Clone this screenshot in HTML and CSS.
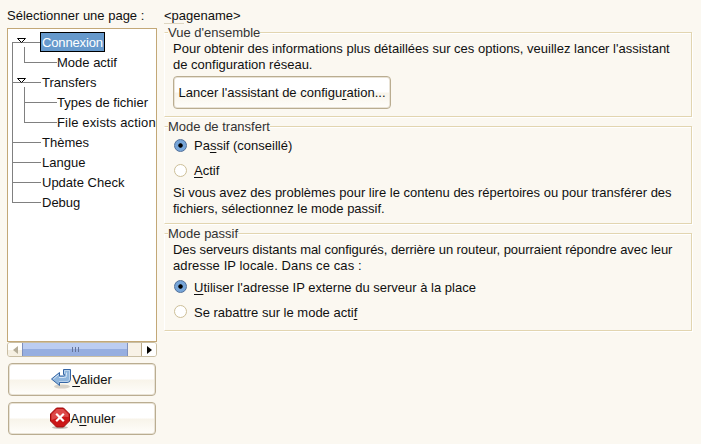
FILE: index.html
```html
<!DOCTYPE html>
<html lang="fr">
<head>
<meta charset="utf-8">
<title>Options</title>
<link rel="stylesheet" href="styles.css">
</head>
<body>
<div class="dialog">
  <aside class="sidebar">
    <div class="heading">Sélectionner une page :</div>
    <div class="tree">
      <svg class="lines" width="60" height="200" viewBox="0 0 60 200" shape-rendering="crispEdges">
        <g fill="#808080">
          <path d="M4 13h1v161h-1zM4 13h29v1H4zM4 53h29v1H4zM4 113h29v1H4zM4 133h29v1H4zM4 153h29v1H4zM4 173h29v1H4z"/>
          <path d="M16 18h1v16h-1zM16 33h33v1H16zM16 58h1v36h-1zM16 73h33v1H16zM16 93h33v1H16z"/>
        </g>
        <g fill="#fff" stroke="#000" shape-rendering="auto">
          <path d="M9.500 9.500h8l-4 4z"/>
          <path d="M9.500 49.500h8l-4 4z"/>
        </g>
      </svg>
      <div class="row"><span class="selected">Connexion</span></div>
      <div class="row child">Mode actif</div>
      <div class="row">Transfers</div>
      <div class="row child">Types de fichier</div>
      <div class="row child wide">File exists action</div>
      <div class="row">Thèmes</div>
      <div class="row">Langue</div>
      <div class="row">Update Check</div>
      <div class="row">Debug</div>
    </div>
    <div class="scrollbar">
      <div class="step"><svg width="5" height="8"><path d="M5 0v8L0 4z" fill="#b5ad98"/></svg></div>
      <div class="thumb"><i></i><i></i><i></i></div>
      <div class="trough"></div>
      <div class="step right"><svg width="5" height="8"><path d="M0 0v8L5 4z" fill="#000"/></svg></div>
    </div>
    <button class="button ok">
      <svg width="22" height="22" viewBox="0 0 22 22">
        <ellipse cx="12" cy="18.500" rx="8" ry="2" fill="#b9b5aa" opacity=".55"/>
        <path d="M13.500 1.500h7v9.500q0 3.500-3.500 3.500H9.500v3L1.500 11l8-6.500v3.500h4q1 0 1-1V6.500h-1z" fill="#8fb5dc" stroke="#3465a4"/>
        <path d="M14.500 5.500v-3h5V11q0 2.500-2.500 2.500H9" fill="none" stroke="#b9d2ec"/>
        <path d="M8.500 6.700L3.300 11M9 9.500h5.500q2 0 2-2V4.500" fill="none" stroke="#d5e5f5"/>
      </svg>
      <span><u>V</u>alider</span>
    </button>
    <button class="button cancel">
      <svg width="22" height="22" viewBox="0 0 22 22">
        <ellipse cx="11" cy="20.500" rx="8" ry="1.500" fill="#99958c" opacity=".6"/>
        <path d="M7.500 1h7l6 6v7l-6 6h-7l-6-6V7z" fill="#cc1717" stroke="#9c0c0c"/>
        <path d="M7.900 2h6.200l5.400 5.400V10q-8-1-17 3V7.400z" fill="#e66a6a" opacity=".6"/>
        <path d="M7.200 6.700l7.600 7.600M14.800 6.700l-7.600 7.600" stroke="#fff" stroke-width="2.200"/>
      </svg>
      <span>A<u>n</u>nuler</span>
    </button>
  </aside>
  <main class="page">
    <div class="heading">&lt;pagename&gt;</div>
    <div class="rule"></div>
    <section class="frame overview">
      <h2><span>Vue d'ensemble</span></h2>
      <p>Pour obtenir des informations plus détaillées sur ces options, veuillez lancer l'assistant<br>de configuration réseau.</p>
      <button class="button wizard"><span>Lancer l'assistant de configu<u>r</u>ation...</span></button>
    </section>
    <section class="frame mode">
      <h2><span>Mode de transfert</span></h2>
      <div class="radio"><i class="dot on"></i><span>Pa<u>s</u>sif (conseillé)</span></div>
      <div class="radio"><i class="dot"></i><span><u>A</u>ctif</span></div>
      <p>Si vous avez des problèmes pour lire le contenu des répertoires ou pour transférer des<br>fichiers, sélectionnez le mode passif.</p>
    </section>
    <section class="frame passive">
      <h2><span>Mode passif</span></h2>
      <p><span class="tight">Des serveurs distants mal configurés, derrière un routeur, pourraient répondre avec leur</span><br><span class="loose">adresse IP locale. Dans ce cas :</span></p>
      <div class="radio"><i class="dot on"></i><span><u>U</u>tiliser l'adresse IP externe du serveur à la place</span></div>
      <div class="radio"><i class="dot"></i><span>Se rabattre sur le mode acti<u>f</u></span></div>
    </section>
  </main>
</div>
</body>
</html>
```
FILE: styles.css
```css
* { box-sizing: border-box; }
body {
  margin: 0;
  background: #fbf8f1;
  color: #101010;
  font: 13px/16px "Liberation Sans", Arial, sans-serif;
  font-feature-settings: "liga" 1;
  white-space: nowrap;
}
.dialog {
  display: grid;
  grid-template-columns: 150px 528px;
  column-gap: 7px;
  width: 701px;
  height: 444px;
  padding: 8px 0 0 7px;
  overflow: hidden;
}
.heading { height: 15px; }
.sidebar { display: flex; flex-direction: column; }
.sidebar .heading { height: 20px; }
u { text-decoration: underline; text-underline-offset: 2px; text-decoration-thickness: 1px; text-decoration-skip-ink: none; }

.tree {
  position: relative;
  height: 314px;
  padding-top: 4px;
  background: #fff;
  border: 1px solid #c3a877;
  overflow: hidden;
}
.lines { position: absolute; left: 0; top: 0; }
.row { height: 20px; line-height: 20px; padding-left: 34px; }
.child { padding-left: 49px; }
.wide { letter-spacing: 0.15px; }
.selected {
  display: block;
  width: 65px;
  height: 20px;
  margin-left: -2px;
  padding-left: 1px;
  line-height: 20px;
  letter-spacing: -0.15px;
  color: #fff;
  background: #6699cc;
  border: 1px solid #000;
  position: relative;
  top: -1px;
}

.scrollbar { display: flex; height: 15px; border: 1px solid #c9bea4; border-radius: 3px; overflow: hidden; }
.step { width: 14px; display: grid; place-items: center; background: linear-gradient(#fffefb 50%, #f6f0e2 50%); }
.step.right { background: #fff; }
.thumb {
  width: 106px;
  display: flex;
  justify-content: center;
  gap: 2px;
  padding-top: 4px;
  background: linear-gradient(#bccdf1 0 45%, #96aee0 50% 100%);
  border: 1px solid #7e90bd;
  border-width: 0 1px;
}
.thumb i { width: 1px; height: 5px; background: #65749b; }
.trough { flex: 1; background: #f8f2e7; border-right: 1px solid #b9aa8c; }

.button {
  display: flex;
  align-items: center;
  justify-content: center;
  height: 33px;
  padding: 0;
  border: 1px solid #baad91;
  border-radius: 4px;
  box-shadow: inset 0 0 0 1px #e9e3d6;
  background: linear-gradient(#fff 0 48%, #f8f4ea 52%, #fffefb);
  color: #101010;
  font: inherit;
}
.sidebar .button { margin: 6px 0 0 1px; width: 148px; }
.button svg { position: relative; top: -1px; margin-right: 0; }
.button.ok svg { margin-left: -2px; }

.rule { width: 20px; height: 1px; background: #ddd5c0; }
.frame {
  height: 85px;
  margin-top: 8px;
  padding: 0 0 0 8px;
  border: 1px solid #e2d5b0;
  border-left-color: #fff;
  box-shadow: 1px 1px #fff, inset 0 1px #fff;
}
.frame.mode { height: 98px; margin-top: 9px; }
.frame.passive { height: 98px; margin-top: 9px; }
h2 { height: 8px; margin: 0 0 0 -5px; font: inherit; color: #333; }
h2 span { display: inline-block; position: relative; top: -8px; height: 16px; background: #fbf8f1; }
p { margin: 0; }
.tight { letter-spacing: -0.065px; }
.loose { letter-spacing: 0.1px; }
.wizard { width: 218px; margin-top: 3px; }
.radio { display: flex; align-items: center; height: 25px; gap: 7px; padding-left: 1px; }
.radio span { position: relative; top: 1px; }
.mode h2 { height: 6px; }
.mode .radio span { top: 0; }
.mode p { margin-top: 2px; }
.dot { width: 13px; height: 13px; border: 1px solid #cdbf98; border-radius: 50%; background: #fff; }
.dot.on { border-color: #506f9a; background: radial-gradient(circle, #000 0 1.800px, #76a5d8 2.600px); }
```
